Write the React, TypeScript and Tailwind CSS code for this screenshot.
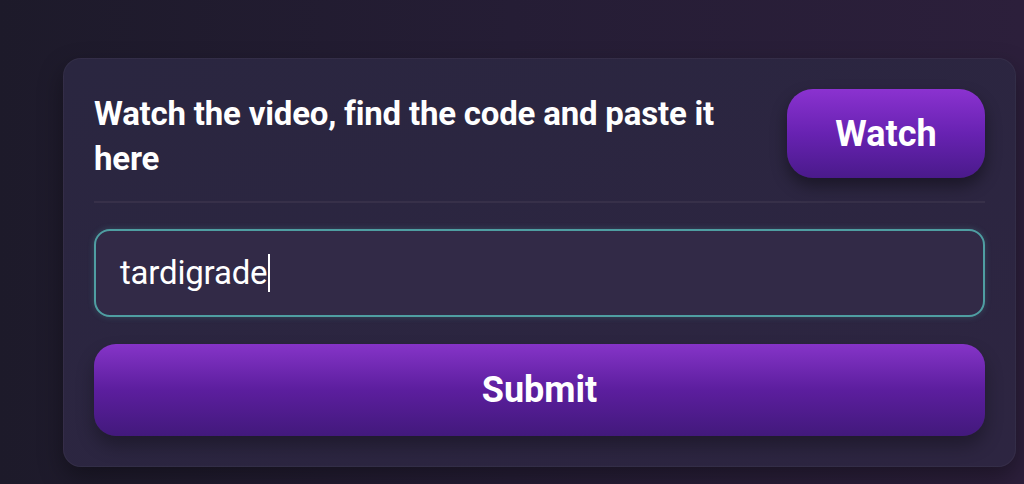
import React from "react";

export default function App() {
  return (
    <div className="w-[1024px] h-[484px] overflow-hidden bg-gradient-to-r from-[#1d1a2a] via-[#251d35] to-[#2c1f3b] font-['Roboto',sans-serif] pt-[58px] pl-[63px]">
      {/* Card */}
      <div className="w-[953px] h-[409px] rounded-[18px] bg-gradient-to-br from-[#2a2640] to-[#2d2541] border border-white/[0.04] shadow-[0_10px_24px_rgba(0,0,0,0.35)] px-[30px] pt-[30px]">
        {/* Header */}
        <div className="flex items-start justify-between">
          <p className="max-w-[670px] pt-[2px] text-[33px] leading-[45px] font-bold text-white tracking-[-0.2px]">
            Watch the video, find the code and paste it here
          </p>
          <button className="w-[198px] h-[89px] rounded-[26px] bg-gradient-to-b from-[#8b32d0] via-[#6822b2] to-[#4a1a8b] shadow-[0_8px_16px_rgba(0,0,0,0.4)] text-[36px] font-bold text-white">
            Watch
          </button>
        </div>

        {/* Divider */}
        <div className="mt-[20px] h-[2px] bg-[#373049]" />

        {/* Code input */}
        <div className="mt-[26px] h-[88px] rounded-[16px] border-2 border-[#4f9ea2] bg-[#322a47] shadow-[0_0_6px_rgba(79,158,162,0.3)] flex items-center pl-[24px]">
          <span className="text-[33px] text-white tracking-[-0.2px]">tardigrade</span>
          <span className="ml-[1px] w-[2px] h-[38px] bg-white" />
        </div>

        {/* Submit */}
        <button className="mt-[27px] w-full h-[92px] rounded-[22px] bg-gradient-to-b from-[#8634c8] via-[#5c1e9e] to-[#42197c] shadow-[0_10px_18px_rgba(0,0,0,0.3)] text-[36px] font-bold text-white">
          Submit
        </button>
      </div>
    </div>
  );
}
